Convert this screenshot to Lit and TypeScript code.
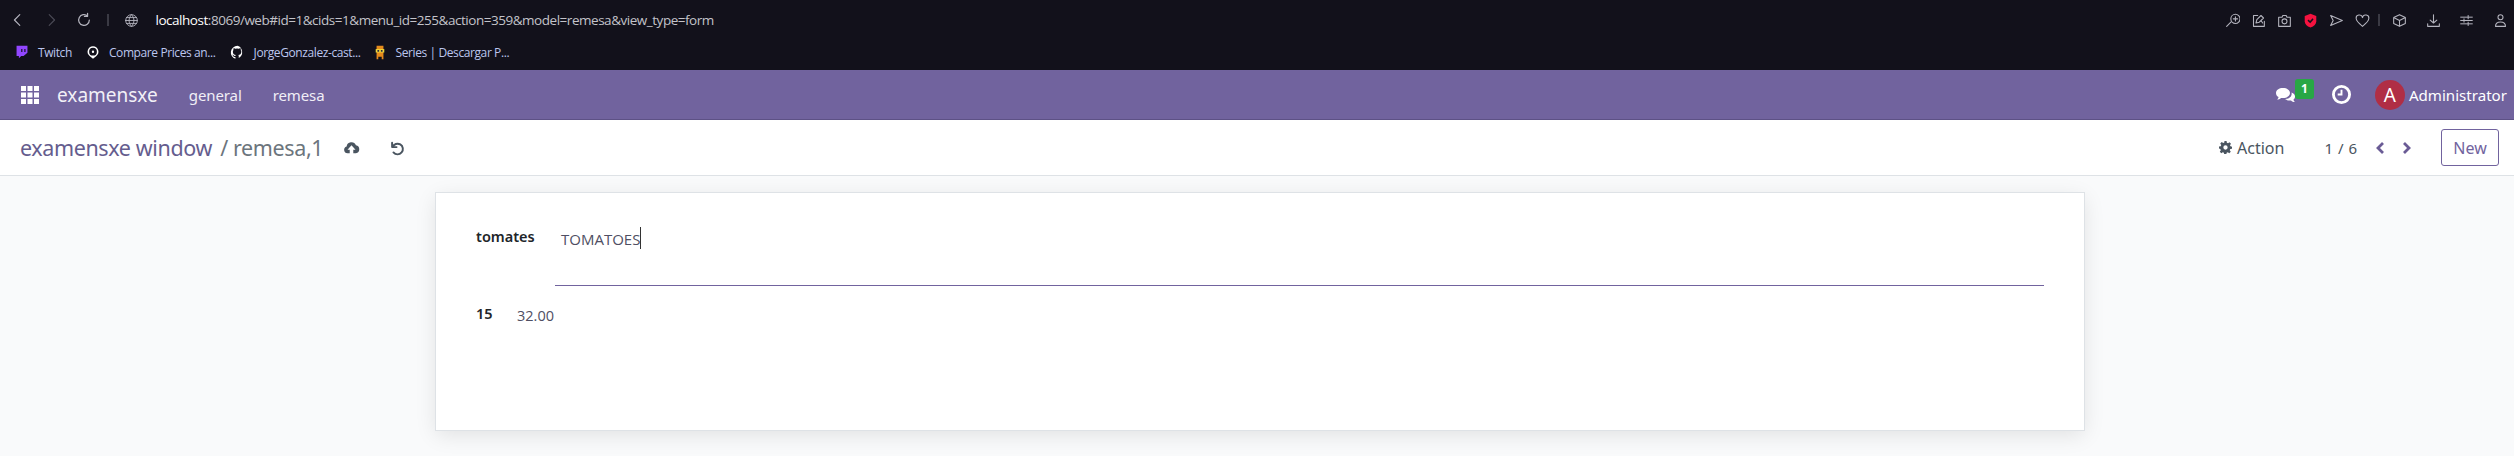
import { LitElement, html, css } from 'lit';
import { customElement } from 'lit/decorators.js';

const stroke = (d: string, w = 1.3, size = 18) => html`<svg width=${size} height=${size} viewBox="0 0 18 18" fill="none" stroke="currentColor" stroke-width=${w} stroke-linecap="round" stroke-linejoin="round"><path d=${d}></path></svg>`;
const fill = (d: string, w: number, h: number, vw = 18, vh = 18) => html`<svg width=${w} height=${h} viewBox="0 0 ${vw} ${vh}" fill="currentColor"><path fill-rule="evenodd" d=${d}></path></svg>`;
const chevron = (d: string) => html`<svg width="9" height="14" viewBox="0 0 9 14" fill="none" stroke="currentColor" stroke-width="2.8"><path d=${d}></path></svg>`;

const toolIcons = [
  'M2 16l5-5M7 7a5.500 5.500 0 1 0 11 0a5.500 5.500 0 1 0-11 0M12.500 4.500v5M10 7h5',
  'M8 3H3v13h13v-6M6 12l1-4 5-5 3 3-5 5zM12 9l2 3',
  'M2 5h4l1-2h4l1 2h4v11H2zM6 10a3 3 0 1 0 6 0a3 3 0 1 0-6 0',
];
const toolIcons2 = [
  'M2 3l14 6-14 6 3-6z',
  'M9 16C4 12 1.500 10 1.500 7a3.700 3.700 0 0 1 7.500-1.500A3.700 3.700 0 0 1 16.500 7c0 3-2.500 5-7.500 9z',
];

@customElement('app-root')
export class AppRoot extends LitElement {
  static styles = css`
    :host {
      display: block;
      height: 456px;
      overflow: hidden;
      background: #f9fafb;
      font-family: 'Noto Sans', 'Open Sans', sans-serif;
      color: #4c4c4c;
    }
    svg { display: block; flex: none; }
    .browser {
      height: 70px;
      background: #12111b;
      color: #b4b4be;
      display: flex;
      flex-direction: column;
    }
    .toolbar {
      height: 40px;
      display: flex;
      align-items: center;
      padding-left: 1.5px;
      flex: none;
    }
    .nav-btn { width: 33px; display: flex; justify-content: center; }
    .nav-btn.off { color: #4a4a55; }
    .dots {
      width: 2px;
      height: 12px;
      margin: 0 15px 0 6px;
      background-image: radial-gradient(#3a3a44 1px, transparent 1px);
      background-size: 2px 4px;
    }
    .url {
      margin-left: 17px;
      font-family: 'Open Sans', sans-serif;
      font-size: 13.500px;
      letter-spacing: -0.47px;
      color: #c3c3ca;
      white-space: nowrap;
    }
    .url b { font-weight: 400; color: #fff; }
    .tools {
      margin-left: auto;
      margin-right: -3px;
      display: flex;
      align-items: center;
    }
    .tool { width: 26px; display: flex; justify-content: center; }
    .tool.wide { width: 33.5px; }
    .tools .dots { margin: 0 3px; }
    .bookmarks {
      display: flex;
      align-items: center;
      height: 24px;
      padding-left: 15px;
      font-family: 'Open Sans', sans-serif;
      font-size: 12px;
      letter-spacing: -0.4px;
      color: #bcc6ee;
      white-space: nowrap;
    }
    .mark { display: flex; align-items: center; gap: 9px; }
    .mark + .mark { margin-left: 14px; }
    .twitch { color: #9146ff; }
    .pin { color: #fff; }
    .github { color: #fff; }

    .navbar {
      height: 49px;
      background: #71639e;
      border-bottom: 1px solid #5d5185;
      color: #fff;
      display: flex;
      align-items: center;
      padding-left: 21px;
      font-size: 15px;
    }
    .brand { font-size: 19px; margin-left: 18px; margin-right: 31px; color: #f2f0f7; }
    .menu { margin-right: 31px; color: #f0eef6; letter-spacing: -0.1px; }
    .systray { margin-left: auto; display: flex; align-items: center; padding-right: 7px; font-size: 15.100px; }
    .chat { position: relative; margin-right: 35px; }
    .badge {
      position: absolute;
      left: 20px;
      top: -7px;
      width: 19px;
      height: 20px;
      border-radius: 3px;
      background: #28a745;
      color: #fff;
      font-size: 12px;
      font-weight: 700;
      line-height: 20px;
      text-align: center;
    }
    .avatar {
      width: 30px;
      height: 30px;
      border-radius: 50%;
      background: #b02e45;
      color: #fff;
      font-size: 19px;
      line-height: 30px;
      text-align: center;
      margin-left: 24px;
      margin-right: 4px;
    }

    .panel {
      height: 56px;
      box-sizing: border-box;
      background: #fff;
      border-bottom: 1px solid #dee2e6;
      display: flex;
      align-items: center;
      padding: 0 15px 0 20px;
    }
    .crumbs { font-size: 21.500px; letter-spacing: -0.38px; color: #655d8e; white-space: nowrap; }
    .crumbs span { color: #6c757d; margin-left: 3px; }
    .dark-icon { color: #4a5560; }
    .cloud { margin-left: 20px; margin-right: 29px; }
    .action {
      margin-left: auto;
      display: flex;
      align-items: center;
      gap: 5px;
      font-size: 16px;
      color: #4a5560;
    }
    .pager { margin-left: 40px; font-size: 15px; color: #4a5560; word-spacing: 1px; }
    .pager-nav { color: #6a5b95; margin-left: 19px; }
    .pager-nav + .pager-nav { margin-left: 17px; }
    .new {
      margin-left: 30px;
      width: 58px;
      height: 37px;
      box-sizing: border-box;
      border: 1px solid #71639e;
      border-radius: 3px;
      background: #fff;
      color: #71639e;
      font: 16px 'Noto Sans', sans-serif;
      padding: 0;
    }

    .sheet {
      box-sizing: border-box;
      width: 1650px;
      height: 239px;
      margin: 16px 0 0 435px;
      padding: 34px 40px 0 40px;
      background: #fff;
      border: 1px solid #dee2e6;
      box-shadow: 0 5px 20px -1px rgba(0, 0, 0, 0.1);
    }
    .row { display: flex; }
    .label { font-size: 14.500px; font-weight: 600; color: #212529; }
    .row-name .label { width: 79px; line-height: 19px; }
    .field {
      flex: 1;
      height: 59px;
      box-sizing: border-box;
      border-bottom: 1px solid #71639e;
      padding-left: 6px;
      font-family: 'Open Sans', sans-serif;
      font-size: 15px;
      color: #4f4f63;
      display: flex;
      align-items: flex-start;
    }
    .field span { line-height: 24px; }
    .caret { width: 1px; height: 22px; background: #333; }
    .row-num { margin-top: 17px; align-items: flex-end; }
    .row-num .label { width: 41px; margin-bottom: 2px; }
    .num { font-size: 14.500px; color: #4f4f63; font-family: 'Open Sans', sans-serif; }
  `;

  render() {
    return html`
      <div class="browser">
        <div class="toolbar">
          <div class="nav-btn">${stroke('M11 3L5 9l6 6', 1.3, 16)}</div>
          <div class="nav-btn off">${stroke('M7 3l6 6-6 6', 1.3, 16)}</div>
          <div class="nav-btn">${stroke('M15 9a6 6 0 1 1-2-4.500M13 1.500v3.500H9.500', 1.4, 16)}</div>
          <div class="dots"></div>
          ${stroke('M2 9a7 7 0 1 0 14 0a7 7 0 1 0-14 0M2 9h14M3 5.500h12M3 12.500h12M9 2c-4 4-4 10 0 14M9 2c4 4 4 10 0 14', 1.1, 15)}
          <div class="url"><b>localhost</b>:8069/web#id=1&amp;cids=1&amp;menu_id=255&amp;action=359&amp;model=remesa&amp;view_type=form</div>
          <div class="tools">
            ${toolIcons.map(d => html`<span class="tool">${stroke(d, 1.3, 15)}</span>`)}
            <span class="tool"><svg width="13" height="15" viewBox="0 0 18 18" preserveAspectRatio="none"><path fill="#f5123f" d="M9 1l8 2.500V10c0 3.500-3 6-8 7.500-5-1.500-8-4-8-7.500V3.500z"></path><path fill="none" stroke="#12111b" stroke-width="2" d="M5.500 8.500L8.500 11l4-4"></path></svg></span>
            ${toolIcons2.map(d => html`<span class="tool">${stroke(d, 1.3, 15)}</span>`)}
            <div class="dots"></div>
            <span class="tool wide">${stroke('M9 2l7 3.500v7L9 16l-7-3.500v-7zM2 5.500L9 9l7-3.500M9 9v7', 1.3, 15)}</span>
            <span class="tool wide">${stroke('M9 2v10M5 8.500L9 12l4-3.500M2 13v3h14v-3', 1.3, 15)}</span>
            <span class="tool wide">${stroke('M2 5h14M2 9h14M2 13h14M11 3v4M6 7v4M11 11v4', 1.2, 15)}</span>
            <span class="tool wide">${stroke('M6 5a3 3 0 1 0 6 0a3 3 0 1 0-6 0M3 16c0-7 12-7 12 0z', 1.3, 15)}</span>
          </div>
        </div>
        <div class="bookmarks">
          <div class="mark"><span class="twitch">${fill('M2 1h14v9l-5 4H8l-3 3v-3H2zM8 5v4h1.500V5zM12 5v4h1.500V5z', 14, 16)}</span>Twitch</div>
          <div class="mark"><span class="pin">${fill('M9 1a7 7 0 0 1 4 12.700L9 17l-4-3.300A7 7 0 0 1 9 1zM9 3a5 5 0 1 0 0 10a5 5 0 1 0 0-10zM9 6.500a1.500 1.500 0 1 1 0 3a1.500 1.500 0 1 1 0-3z', 14, 17)}</span>Compare Prices an...</div>
          <div class="mark"><span class="github">${fill('M9 1a8 8 0 0 0-2.500 15.600v-2.300c-2.200.5-2.700-1-2.700-1-.4-1-.9-1.200-.9-1.200-.7-.5.1-.5.1-.5.8.1 1.200.8 1.200.8.7 1.200 1.900.9 2.300.7.100-.5.300-.9.500-1.100-1.800-.2-3.600-.9-3.600-4 0-.9.300-1.600.800-2.100-.1-.2-.4-1 .1-2.100 0 0 .7-.2 2.200.8a7.600 7.600 0 0 1 4 0c1.500-1 2.200-.8 2.200-.8.500 1.100.2 1.900.1 2.100.5.500.8 1.200.8 2.100 0 3.100-1.900 3.800-3.600 4 .3.200.5.700.5 1.500v2.100A8 8 0 0 0 9 1z', 15, 15)}</span>JorgeGonzalez-cast...</div>
          <div class="mark">
            <svg width="12" height="17" viewBox="0 0 14 18"><path fill="#e58a1c" d="M3 1h8v16H9v-3H5v3H3z"></path><path fill="#f2d93a" d="M2 5h10v4H2z"></path><path fill="#2c2c40" d="M4 6h2v2H4zM8 6h2v2H8z"></path></svg>
            Series | Descargar P...
          </div>
        </div>
      </div>

      <div class="navbar">
        ${fill('M0 0h5v5H0zM6.500 0h5v5h-5zM13 0h5v5h-5zM0 6.500h5v5H0zM6.500 6.500h5v5h-5zM13 6.500h5v5h-5zM0 13h5v5H0zM6.500 13h5v5h-5zM13 13h5v5h-5z', 18, 18)}
        <span class="brand">examensxe</span>
        <span class="menu">general</span>
        <span class="menu">remesa</span>
        <div class="systray">
          <div class="chat">
            ${fill('M8 2c4 0 7 2 7 5s-3 5-7 5c-1 0-1.500 0-2 0-1 1-2.500 1.500-4 1.500 1-.8 1.500-1.500 1.500-2.500C1.500 10 1 8.500 1 7c0-3 3-5 7-5zM16.500 6.500c2 .7 3.500 2.200 3.500 4 0 1.300-.6 2.300-1.500 3 0 1 .5 1.800 1.500 2.500-1.500 0-3-.5-4-1.500-2 .3-4.500-.3-6-1.500 4 .3 7.500-2.500 6.500-6.500z', 22, 18, 22, 18)}
            <div class="badge">1</div>
          </div>
          ${fill('M10 0a10 10 0 1 1 0 20a10 10 0 1 1 0-20zM10 3a7 7 0 1 0 0 14a7 7 0 1 0 0-14zM9 5h2v6H6V9h3z', 19, 19, 20, 20)}
          <div class="avatar">A</div>
          <span>Administrator</span>
        </div>
      </div>

      <div class="panel">
        <div class="crumbs">examensxe window <span>/ remesa,1</span></div>
        <span class="dark-icon cloud">${fill('M4.500 15A4 4 0 0 1 3.500 7.200 5.500 5.500 0 0 1 14 5.800 4.700 4.700 0 0 1 14 15h-3v-4h2.500L9 6l-4.500 5H7v4z', 17, 16)}</span>
        <span class="dark-icon">${stroke('M3.500 3v5h5M4 8a6 6 0 1 1 1 6', 2.2, 16)}</span>
        <div class="action">
          ${fill('M7.500 0h3l.4 2.400 1.600.7 2-1.400 2.100 2.100-1.400 2 .7 1.600 2.100.4v3l-2.400.4-.7 1.600 1.400 2-2.100 2.100-2-1.400-1.600.7-.4 2.400h-3l-.4-2.400-1.600-.7-2 1.400-2.100-2.100 1.400-2-.7-1.600L0 10.500v-3l2.400-.4.7-1.600-1.400-2 2.100-2.100 2 1.400 1.600-.7zM9 6a3 3 0 1 0 0 6a3 3 0 1 0 0-6z', 13, 13)}
          <span>Action</span>
        </div>
        <div class="pager">1 / 6</div>
        <span class="pager-nav">${chevron('M7 2L2 7l5 5')}</span>
        <span class="pager-nav">${chevron('M2 2l5 5-5 5')}</span>
        <button class="new">New</button>
      </div>

      <div class="sheet">
        <div class="row row-name">
          <div class="label">tomates</div>
          <div class="field"><span>TOMATOES</span><i class="caret"></i></div>
        </div>
        <div class="row row-num">
          <div class="label">15</div>
          <div class="num">32.00</div>
        </div>
      </div>
    `;
  }
}
